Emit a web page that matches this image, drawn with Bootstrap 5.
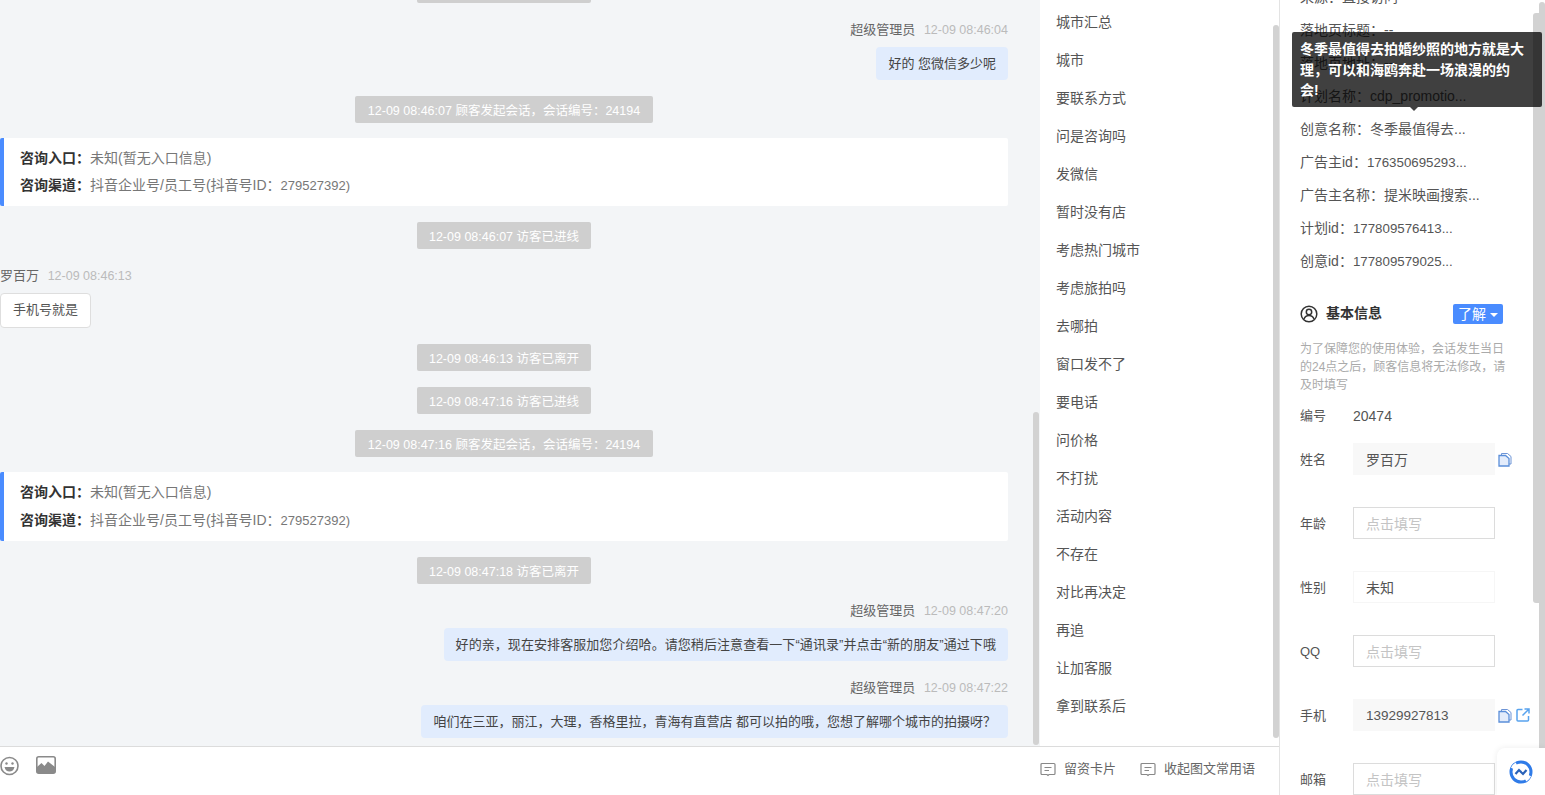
<!DOCTYPE html>
<html lang="zh-CN">
<head>
    <meta charset="UTF-8">
    <meta name="viewport" content="width=device-width, initial-scale=1.0">
    <title>会话详情</title>
    <link href="https://cdn.jsdelivr.net/npm/bootstrap@5.3.0/dist/css/bootstrap.min.css" rel="stylesheet">
    <style>
        html, body {
            height: 795px;
            overflow: hidden;
        }
        body {
            font-family: "Liberation Sans", "Noto Sans CJK SC", sans-serif;
            font-size: 13px;
            color: #555;
            background: #fff;
        }
        .app-shell {
            height: 795px;
            width: 1545px;
            position: relative;
            overflow: hidden;
        }
        .left-part {
            width: 1280px;
            border-right: 1px solid #e3e3e3;
        }
        .top-part {
            height: 747px;
            border-bottom: 1px solid #dcdcdc;
        }
        .chat-pane {
            width: 1040px;
            background: #f3f5f7;
            overflow: hidden;
        }
        .chat-flow {
            width: 1008px;
            margin-top: -24px;
        }
        .sys-pill {
            background: #cfcfcf;
            color: #fff;
            height: 27px;
            line-height: 30px;
            padding: 0 12px;
            border-radius: 2px;
            margin-bottom: 16px;
            font-size: 12.5px;
        }
        .pill-wide {
            padding: 0 13px;
        }
        .who-line {
            line-height: 18px;
            margin-top: 2px;
            margin-bottom: 8px;
            color: #666;
        }
        .who-time {
            color: #bbb;
            margin-left: 5px;
            font-size: 12.5px;
        }
        .bubble-agent {
            background: #e1ecfd;
            color: #444;
            height: 33px;
            line-height: 33px;
            padding: 0 12px;
            border-radius: 4px;
            margin-bottom: 16px;
        }
        .bubble-wide {
            letter-spacing: .07px;
        }
        .bubble-guest {
            background: #fff;
            border: 1px solid #dedede;
            color: #555;
            height: 35px;
            line-height: 31px;
            padding: 0 12px;
            border-radius: 4px;
            margin-bottom: 16px;
        }
        .entry-box {
            background: #fff;
            border-left: 4px solid #4a8cff;
            border-radius: 2px;
            padding: 7px 16px;
            margin-top: -1px;
            margin-bottom: 16px;
            line-height: 27px;
            font-size: 14px;
            color: #777;
        }
        .entry-tall {
            line-height: 27.5px;
        }
        .entry-box b {
            color: #333;
        }
        .id-num {
            font-size: 13px;
        }
        .phrase-pane {
            width: 239px;
            padding-top: 3px;
            overflow: hidden;
        }
        .phrase-item {
            height: 38px;
            line-height: 38px;
            padding-left: 16px;
            font-size: 14px;
            color: #555;
        }
        .foot-bar {
            height: 48px;
        }
        .foot-icons {
            margin-bottom: 10px;
        }
        .foot-link {
            color: #666;
            margin-bottom: 4px;
        }
        .info-pane {
            width: 265px;
            padding: 0 32px 0 20px;
            margin-top: -19px;
        }
        .attr-line {
            height: 33px;
            line-height: 33px;
            white-space: nowrap;
            font-size: 14px;
            color: #555;
        }
        .attr-num {
            font-size: 13.3px;
        }
        .info-head {
            margin-top: 25px;
            margin-bottom: 16px;
            padding-right: 10px;
        }
        .info-title {
            font-weight: 700;
            color: #333;
            font-size: 14px;
        }
        .learn-btn {
            background: #4a8cff;
            color: #fff;
            height: 20px;
            line-height: 20px;
            width: 50px;
            text-align: center;
            border-radius: 2px;
            font-size: 14px;
        }
        .caret-down {
            display: inline-block;
            border: 4px solid transparent;
            border-top: 4px solid #fff;
            border-bottom: 0;
            vertical-align: 2px;
        }
        .info-hint {
            color: #aaa;
            font-size: 12px;
            line-height: 18px;
            margin-bottom: 12px;
        }
        .serial-row {
            margin-bottom: 15px;
        }
        .serial-row .field-label {
            margin-top: 0;
        }
        .serial-no {
            font-size: 14px;
        }
        .field-row {
            height: 34px;
            margin-bottom: 30px;
        }
        .field-label {
            width: 53px;
            flex: none;
            margin-top: 2px;
        }
        .field-box {
            width: 142px;
            height: 32px;
            line-height: 32px;
            padding: 0 12px;
            flex: none;
            font-size: 14px;
            border: 1px solid #dcdcdc;
            color: #c4c4c4;
        }
        .field-box.is-filled {
            background: #f8f8f8;
            border-color: #f8f8f8;
            color: #555;
        }
        .field-box.is-plain {
            background: #fff;
            border-color: #f6f6f6;
            color: #555;
        }
        .field-box.phone-no {
            font-size: 13.5px;
        }
        .field-icons {
            margin-left: 3px;
        }
        .scroll-thumb {
            position: absolute;
            background: #d2d2d2;
            border-radius: 3px;
        }
        .thumb-chat { left: 1033px; top: 412px; width: 6px; height: 333px; }
        .thumb-phrase { left: 1273px; top: 25px; width: 6px; height: 713px; }
        .thumb-info { left: 1533px; top: 13px; width: 6px; height: 590px; border-radius: 3px 0 0 3px; }
        .thumb-outer { left: 1539px; top: 2px; width: 6px; height: 793px; border-radius: 3px 3px 0 0; }
        .tip-box {
            position: absolute;
            left: 1292px;
            top: 32px;
            width: 250px;
            height: 75px;
            padding: 7px 16px 6px 8px;
            background: rgba(0, 0, 0, .75);
            color: #fff;
            font-size: 14px;
            font-weight: 700;
            line-height: 20.5px;
            border-radius: 2px;
        }
        .tip-box::after {
            content: "";
            position: absolute;
            left: 118px;
            bottom: -4px;
            border: 4px solid transparent;
            border-top-color: rgba(0, 0, 0, .75);
            border-bottom: 0;
        }
        .float-help {
            position: absolute;
            right: 0;
            top: 748px;
            width: 48px;
            height: 47px;
            background: #fff;
            border-radius: 8px 0 0 0;
            box-shadow: 0 0 6px rgba(0, 0, 0, .08);
        }
    </style>
</head>
<body>
    <div class="app-shell d-flex">
        <div class="left-part d-flex flex-column">
            <div class="top-part d-flex">
                <div class="chat-pane">
                    <div class="chat-flow d-flex flex-column">
                        <div class="sys-pill align-self-center">12-09 08:46:02 访客已进线</div>
                        <div class="who-line text-end">超级管理员 <span class="who-time">12-09 08:46:04</span></div>
                        <div class="bubble-agent align-self-end">好的 您微信多少呢</div>
                        <div class="sys-pill pill-wide align-self-center">12-09 08:46:07 顾客发起会话，会话编号：24194</div>
                        <div class="entry-box">
                            <div><b>咨询入口：</b>未知(暂无入口信息)</div>
                            <div><b>咨询渠道：</b>抖音企业号/员工号(抖音号ID：<span class="id-num">279527392)</span></div>
                        </div>
                        <div class="sys-pill align-self-center">12-09 08:46:07 访客已进线</div>
                        <div class="who-line">罗百万 <span class="who-time">12-09 08:46:13</span></div>
                        <div class="bubble-guest align-self-start">手机号就是</div>
                        <div class="sys-pill align-self-center">12-09 08:46:13 访客已离开</div>
                        <div class="sys-pill align-self-center">12-09 08:47:16 访客已进线</div>
                        <div class="sys-pill pill-wide align-self-center">12-09 08:47:16 顾客发起会话，会话编号：24194</div>
                        <div class="entry-box entry-tall">
                            <div><b>咨询入口：</b>未知(暂无入口信息)</div>
                            <div><b>咨询渠道：</b>抖音企业号/员工号(抖音号ID：<span class="id-num">279527392)</span></div>
                        </div>
                        <div class="sys-pill align-self-center">12-09 08:47:18 访客已离开</div>
                        <div class="who-line text-end">超级管理员 <span class="who-time">12-09 08:47:20</span></div>
                        <div class="bubble-agent bubble-wide align-self-end">好的亲，现在安排客服加您介绍哈。请您稍后注意查看一下“通讯录”并点击“新的朋友”通过下哦</div>
                        <div class="who-line text-end">超级管理员 <span class="who-time">12-09 08:47:22</span></div>
                        <div class="bubble-agent align-self-end">咱们在三亚，丽江，大理，香格里拉，青海有直营店 都可以拍的哦，您想了解哪个城市的拍摄呀？</div>
                    </div>
                </div>
                <div class="phrase-pane">
                    <div class="phrase-item">城市汇总</div>
                    <div class="phrase-item">城市</div>
                    <div class="phrase-item">要联系方式</div>
                    <div class="phrase-item">问是咨询吗</div>
                    <div class="phrase-item">发微信</div>
                    <div class="phrase-item">暂时没有店</div>
                    <div class="phrase-item">考虑热门城市</div>
                    <div class="phrase-item">考虑旅拍吗</div>
                    <div class="phrase-item">去哪拍</div>
                    <div class="phrase-item">窗口发不了</div>
                    <div class="phrase-item">要电话</div>
                    <div class="phrase-item">问价格</div>
                    <div class="phrase-item">不打扰</div>
                    <div class="phrase-item">活动内容</div>
                    <div class="phrase-item">不存在</div>
                    <div class="phrase-item">对比再决定</div>
                    <div class="phrase-item">再追</div>
                    <div class="phrase-item">让加客服</div>
                    <div class="phrase-item">拿到联系后</div>
                </div>
            </div>
            <div class="foot-bar d-flex justify-content-between align-items-center">
                <div class="foot-icons d-flex gap-3">
                    <svg width="20" height="20" viewBox="0 0 20 20"><circle cx="9.5" cy="10" r="8.5" fill="none" stroke="#8a8a8a" stroke-width="1.6"/><circle cx="6.5" cy="7.5" r="1.2" fill="#8a8a8a"/><circle cx="12.5" cy="7.5" r="1.2" fill="#8a8a8a"/><path d="M4.5 11h10c-.6 3-2.6 4.6-5 4.6s-4.4-1.6-5-4.6z" fill="#8a8a8a"/></svg>
                    <svg width="20" height="18" viewBox="0 0 20 18"><rect x=".8" y=".8" width="18.4" height="16.4" rx="2" fill="#fff" stroke="#8a8a8a" stroke-width="1.6"/><path d="M1 17v-6l4.500-4 3 3 3.500-4.500 7 5.500v6z" fill="#8a8a8a"/></svg>
                </div>
                <div class="d-flex align-items-center foot-link me-4">
                    <svg class="me-2" width="16" height="16" viewBox="0 0 16 16"><path d="M2 2.500h12a1 1 0 0 1 1 1v9a1 1 0 0 1-1 1H9l-1 1-1-1H2a1 1 0 0 1-1-1v-9a1 1 0 0 1 1-1z" fill="none" stroke="#888" stroke-width="1.200"/><path d="M4.500 6.500h7M4.500 9.500h4.500" stroke="#888" stroke-width="1.200"/></svg>
                    <span class="me-4">留资卡片</span>
                    <svg class="me-2" width="16" height="16" viewBox="0 0 16 16"><path d="M2 2.500h12a1 1 0 0 1 1 1v9a1 1 0 0 1-1 1H9l-1 1-1-1H2a1 1 0 0 1-1-1v-9a1 1 0 0 1 1-1z" fill="none" stroke="#888" stroke-width="1.200"/><path d="M4.500 6.500h7M4.500 9.500h4.500" stroke="#888" stroke-width="1.200"/></svg>
                    <span>收起图文常用语</span>
                </div>
            </div>
        </div>
        <div class="info-pane">
            <div class="attr-line">来源：直接访问</div>
            <div class="attr-line">落地页标题：--</div>
            <div class="attr-line">落地页地址：--</div>
            <div class="attr-line">计划名称：cdp_promotio...</div>
            <div class="attr-line">创意名称：冬季最值得去...</div>
            <div class="attr-line">广告主id：<span class="attr-num">176350695293...</span></div>
            <div class="attr-line">广告主名称：提米映画搜索...</div>
            <div class="attr-line">计划id：<span class="attr-num">177809576413...</span></div>
            <div class="attr-line">创意id：<span class="attr-num">177809579025...</span></div>
            <div class="info-head d-flex align-items-center">
                <svg class="me-2" width="18" height="18" viewBox="0 0 18 18"><circle cx="9" cy="9" r="7.800" fill="none" stroke="#333" stroke-width="1.500"/><circle cx="9" cy="7" r="2.700" fill="none" stroke="#333" stroke-width="1.500"/><path d="M4 14c1-2.600 3-3.400 5-3.400s4 .8 5 3.400" fill="none" stroke="#333" stroke-width="1.500"/></svg>
                <span class="info-title">基本信息</span>
                <span class="learn-btn ms-auto">了解 <i class="caret-down"></i></span>
            </div>
            <div class="info-hint">为了保障您的使用体验，会话发生当日的24点之后，顾客信息将无法修改，请及时填写</div>
            <div class="serial-row d-flex"><span class="field-label">编号</span><span class="serial-no">20474</span></div>
            <div class="field-row d-flex align-items-center"><span class="field-label">姓名</span><span class="field-box is-filled">罗百万</span>
                <span class="field-icons d-flex"><svg width="14" height="15" viewBox="0 0 14 15"><path d="M3.500 3.500V1.500h6l3.500 3v7.500h-2" fill="none" stroke="#6d94d6" stroke-width="1"/><path d="M1 3.500h6.500l3.500 3v7.500H1z" fill="#e3ecfb" stroke="#5b8fd9" stroke-width="1.300"/></svg></span>
            </div>
            <div class="field-row d-flex align-items-center"><span class="field-label">年龄</span><span class="field-box">点击填写</span></div>
            <div class="field-row d-flex align-items-center"><span class="field-label">性别</span><span class="field-box is-plain">未知</span></div>
            <div class="field-row d-flex align-items-center"><span class="field-label">QQ</span><span class="field-box">点击填写</span></div>
            <div class="field-row d-flex align-items-center"><span class="field-label">手机</span><span class="field-box is-filled phone-no">13929927813</span>
                <span class="field-icons d-flex gap-1"><svg width="14" height="15" viewBox="0 0 14 15"><path d="M3.500 3.500V1.500h6l3.500 3v7.500h-2" fill="none" stroke="#6d94d6" stroke-width="1"/><path d="M1 3.500h6.500l3.500 3v7.500H1z" fill="#e3ecfb" stroke="#5b8fd9" stroke-width="1.300"/></svg><svg width="14" height="14" viewBox="0 0 14 14"><path d="M6.500 1.500H2a1 1 0 0 0-1 1v9.500a1 1 0 0 0 1 1h9.500a1 1 0 0 0 1-1V8M8.500 1h4.500v4.500M13 1L6.500 7.500" fill="none" stroke="#58a3ee" stroke-width="1.500"/></svg></span>
            </div>
            <div class="field-row d-flex align-items-center"><span class="field-label">邮箱</span><span class="field-box">点击填写</span></div>
        </div>
        <div class="scroll-thumb thumb-chat"></div>
        <div class="scroll-thumb thumb-phrase"></div>
        <div class="scroll-thumb thumb-info"></div>
        <div class="scroll-thumb thumb-outer"></div>
        <div class="tip-box">冬季最值得去拍婚纱照的地方就是大理，可以和海鸥奔赴一场浪漫的约会!</div>
        <div class="float-help d-flex align-items-center justify-content-center">
            <svg width="24" height="24" viewBox="0 0 24 24"><circle cx="12" cy="12" r="10" fill="none" stroke="#2f7be8" stroke-width="3"/><path d="M3.500 8.500a10 10 0 0 1 4-4.500M20.500 15.500a10 10 0 0 1-4 4.500" fill="none" stroke="#fff" stroke-width="3.400"/><path d="M6.500 14l3.500-4 2.500 2.500M11.500 11.500l2.500 2.500 3.500-4" fill="none" stroke="#2a62b8" stroke-width="2.200"/></svg>
        </div>
    </div>
    <script src="https://cdn.jsdelivr.net/npm/bootstrap@5.3.0/dist/js/bootstrap.bundle.min.js"></script>
</body>
</html>
